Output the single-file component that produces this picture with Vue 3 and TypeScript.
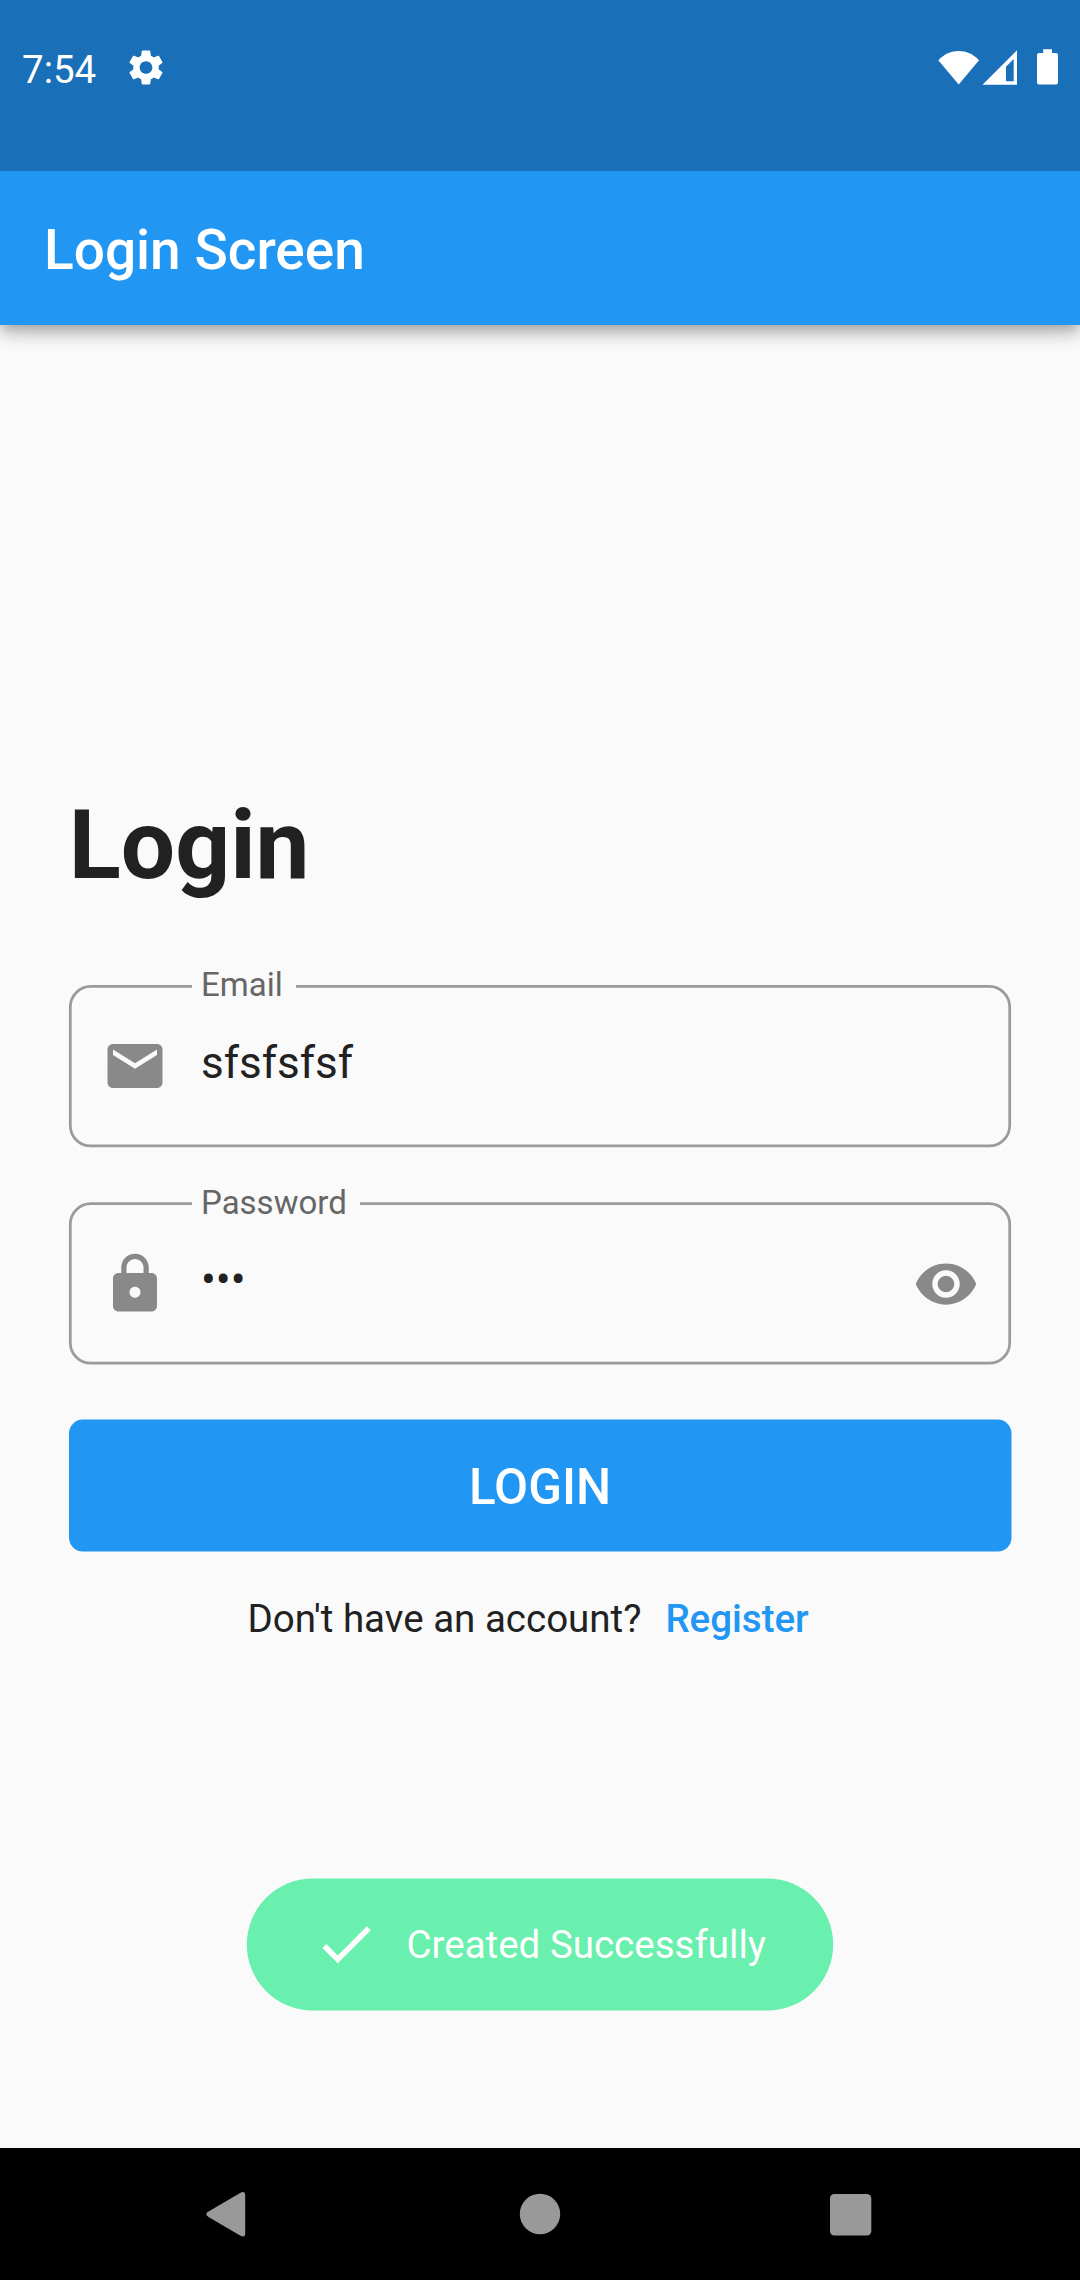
<script setup lang="ts">
import { ref } from 'vue'

interface Field {
  label: string
  value: string
  icon: string
  /** sub-pixel offset of the outline inside its box */
  offset: number
  labelWidth: number
  suffix?: string
}

const icons = {
  mail: 'M20 4H4c-1.1 0-1.99.9-1.99 2L2 18c0 1.1.9 2 2 2h16c1.1 0 2-.9 2-2V6c0-1.1-.9-2-2-2zm0 4l-8 5-8-5V6l8 5 8-5v2z',
  lock: 'M18 8h-1V6c0-2.76-2.24-5-5-5S7 3.24 7 6v2H6c-1.1 0-2 .9-2 2v10c0 1.1.9 2 2 2h12c1.1 0 2-.9 2-2V10c0-1.1-.9-2-2-2zm-6 9c-1.1 0-2-.9-2-2s.9-2 2-2 2 .9 2 2-.9 2-2 2zm3.1-9H8.9V6c0-1.71 1.39-3.1 3.1-3.1 1.71 0 3.1 1.39 3.1 3.1v2z',
  eye: 'M12 4.5C7 4.5 2.73 7.61 1 12c1.73 4.39 6 7.5 11 7.5s9.27-3.11 11-7.5c-1.73-4.39-6-7.5-11-7.5zM12 17c-2.76 0-5-2.24-5-5s2.24-5 5-5 5 2.24 5 5-2.24 5-5 5zm0-8c-1.66 0-3 1.34-3 3s1.34 3 3 3 3-1.34 3-3-1.34-3-3-3z',
  check: 'M9 16.17L4.83 12l-1.42 1.41L9 19 21 7l-1.41-1.41z',
  gear: 'M19.14 12.94c.04-.3.06-.61.06-.94 0-.32-.02-.64-.07-.94l2.03-1.58c.18-.14.23-.41.12-.61l-1.92-3.32c-.12-.22-.37-.29-.59-.22l-2.39.96c-.5-.38-1.03-.7-1.62-.94L14.4 2.81c-.04-.24-.24-.41-.48-.41h-3.84c-.24 0-.43.17-.47.41L9.25 5.35c-.59.24-1.13.57-1.62.94l-2.39-.96c-.22-.08-.47 0-.59.22L2.74 8.87c-.12.21-.08.47.12.61l2.03 1.58c-.05.3-.09.63-.09.94s.02.64.07.94l-2.03 1.58c-.18.14-.23.41-.12.61l1.92 3.32c.12.22.37.29.59.22l2.39-.96c.5.38 1.03.7 1.62.94l.36 2.54c.05.24.24.41.48.41h3.84c.24 0 .44-.17.47-.41l.36-2.54c.59-.24 1.13-.56 1.62-.94l2.39.96c.22.08.47 0 .59-.22l1.92-3.32c.12-.22.07-.47-.12-.61l-2.01-1.58zM12 15.6c-1.98 0-3.6-1.62-3.6-3.6s1.62-3.6 3.6-3.6 3.6 1.62 3.6 3.6-1.62 3.6-3.6 3.6z',
}

const fields = ref<Field[]>([
  { label: 'Email', value: 'sfsfsfsf', icon: icons.mail, offset: 0.1, labelWidth: 104 },
  { label: 'Password', value: '•••', icon: icons.lock, offset: 0.35, labelWidth: 168, suffix: icons.eye },
])
</script>

<template>
  <div class="screen">
    <header class="status">
      <span class="time">7:54</span>
      <svg class="gear" viewBox="2.4 2.1 19.2 19.8"><path :d="icons.gear" /></svg>
      <svg class="system" width="124" height="38" viewBox="0 0 124 38">
        <path d="M0.3 12.3C12 0 29.5 0 41 12.3L20.7 36.5Z" />
        <path fill-rule="evenodd" d="M44.5 36.8L79 2.3V36.8ZM68 33.2H75.7V11L68 18.7Z" />
        <path d="M105.2 1.3H114V5H118q2 0 2 2V34.5q0 2-2 2H101q-2 0-2-2V7q0-2 2-2H105.2Z" />
      </svg>
    </header>

    <div class="appbar">Login Screen</div>

    <main class="body">
      <h1>Login</h1>

      <div v-for="f in fields" :key="f.label" class="field" :class="{ secret: f.suffix }">
        <svg class="outline" width="944" height="163" viewBox="0 0 944 163">
          <rect x="2.3" :y="1.375 + f.offset" width="939.4" height="159.5" rx="20.6" />
        </svg>
        <span class="label" :style="{ width: f.labelWidth + 'px' }">{{ f.label }}</span>
        <svg class="icon" viewBox="0 0 24 24"><path :d="f.icon" /></svg>
        <span class="value">{{ f.value }}</span>
        <svg v-if="f.suffix" class="icon suffix" viewBox="0 0 24 24"><path :d="f.suffix" /></svg>
      </div>

      <button class="login" type="button">
        <svg class="fill" width="944" height="133" viewBox="0 0 944 133">
          <rect x="1" y="0.6" width="942.5" height="132" rx="13.75" />
        </svg>
        <span>LOGIN</span>
      </button>

      <p class="signup">
        <span>Don't have an account?</span>
        <a>Register</a>
      </p>

      <div class="toast">
        <svg class="fill" width="588" height="133" viewBox="0 0 588 133">
          <rect x="0.8" y="0.5" width="586.4" height="132" rx="66" />
        </svg>
        <svg class="check" viewBox="0 0 24 24"><path :d="icons.check" /></svg>
        <span>Created Successfully</span>
      </div>
    </main>

    <nav class="navbar">
      <svg width="1080" height="132" viewBox="0 0 1080 132">
        <path d="M208.5 63.6L240.5 44.8Q245.2 42.6 245.2 47.5V85.5Q245.2 90 240.5 87.8L208.5 69Q204 66.3 208.5 63.6Z" />
        <circle cx="540" cy="66" r="20.2" />
        <rect x="830" y="46" width="41.3" height="41.5" rx="4.5" />
      </svg>
    </nav>
  </div>
</template>

<style>
body {
  margin: 0;
  background: #fafafa;
}
</style>

<style scoped>
.screen {
  width: 1080px;
  height: 2280px;
  display: flex;
  flex-direction: column;
  background: #fafafa;
  color: #212121;
  font-family: Roboto, sans-serif;
  overflow: hidden;
}
svg {
  display: block;
  flex: none;
}
.status {
  position: relative;
  z-index: 1;
  box-sizing: border-box;
  height: 171px;
  padding: 48px 22px 0;
  display: flex;
  align-items: flex-start;
  background: #1a70b8;
  color: #fff;
  fill: #fff;
}
.time {
  width: 107px;
  font-size: 38.5px;
  line-height: 44px;
}
.gear {
  width: 34px;
  height: 35px;
  margin-top: 2px;
}
.system {
  margin-left: auto;
  margin-right: -4px;
}
.appbar {
  position: relative;
  box-sizing: border-box;
  height: 154px;
  padding-left: 44px;
  background: #2196f3;
  color: #fff;
  font-size: 55px;
  font-weight: 500;
  line-height: 158px;
  box-shadow: 0 5px 11px -3px rgba(0, 0, 0, 0.2), 0 11px 14px 0 rgba(0, 0, 0, 0.14), 0 3px 27px 0 rgba(0, 0, 0, 0.12);
}
.body {
  flex: 1;
  padding: 464px 68px 0;
  display: flex;
  flex-direction: column;
}
h1 {
  margin: 0 0 83px;
  padding-left: 0.75px;
  font-size: 96.25px;
  font-weight: 700;
  line-height: 113px;
}
.field {
  position: relative;
  height: 163px;
  margin-bottom: 54px;
  display: flex;
  align-items: center;
}
.outline {
  position: absolute;
  inset: 0;
  fill: none;
  stroke: #9b9b9b;
  stroke-width: 2.75;
}
.label {
  position: absolute;
  left: 124px;
  top: -19px;
  box-sizing: border-box;
  padding-left: 9px;
  background: #fafafa;
  color: #666;
  font-size: 33px;
  line-height: 38px;
}
.secret .label {
  top: -18px;
}
.icon {
  position: relative;
  width: 66px;
  height: 66px;
  margin-left: 34px;
  margin-top: -1px;
  fill: #898989;
}
.secret .icon {
  margin-top: 1px;
}
.value {
  position: relative;
  flex: 1;
  margin-left: 33px;
  margin-top: -7px;
  font-size: 44px;
  line-height: 52px;
}
.suffix {
  margin-right: 33.5px;
}
.login {
  position: relative;
  height: 133px;
  border: 0;
  padding: 0;
  display: flex;
  align-items: center;
  justify-content: center;
  background: none;
  color: #fff;
  font: 500 49.5px/58px Roboto, sans-serif;
}
.login span {
  position: relative;
  padding-top: 2px;
}
.fill {
  position: absolute;
  inset: 0;
}
.login .fill {
  fill: #2196f3;
}
.signup {
  margin: 44px 0 0 179.5px;
  display: flex;
  font-size: 38.5px;
  line-height: 45px;
}
.signup a {
  margin-left: 24px;
  color: #2196f3;
  font-weight: 500;
}
.toast {
  position: relative;
  width: 588px;
  height: 133px;
  margin-top: 237px;
  align-self: center;
  display: flex;
  align-items: center;
  color: #fff;
  font-size: 38.5px;
  line-height: 45px;
}
.toast .fill {
  fill: #69f0ae;
}
.toast span {
  position: relative;
}
.check {
  position: relative;
  width: 66px;
  height: 66px;
  margin: -2px 27.5px 0 67px;
  fill: #fff;
}
.navbar {
  height: 132px;
  background: #000;
  fill: #999;
}
</style>
